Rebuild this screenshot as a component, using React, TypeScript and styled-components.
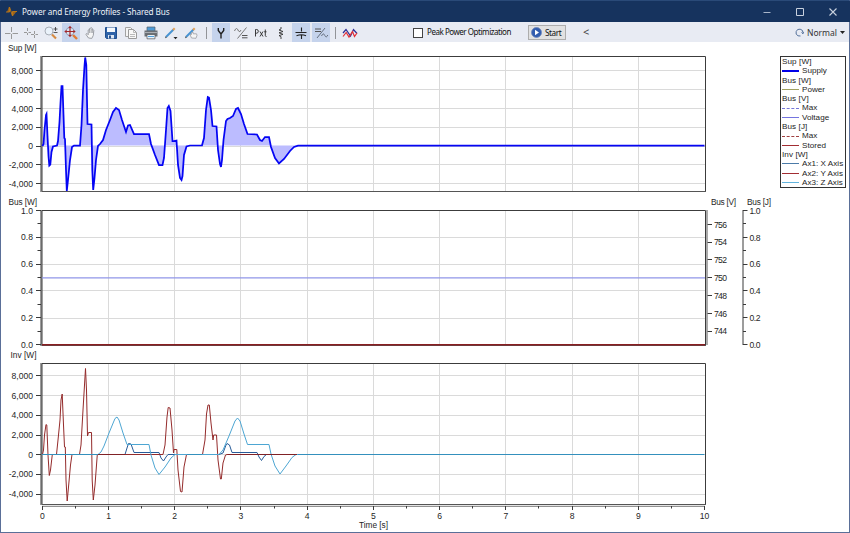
import React from "react";
import styled, { createGlobalStyle } from "styled-components";

const GlobalStyle = createGlobalStyle`
  * { box-sizing: border-box; }
  body { margin: 0; background: #fff; overflow: hidden; }
`;

const Window = styled.div`
  width: 850px;
  height: 533px;
  display: flex;
  flex-direction: column;
  border: 1px solid #5a6f98;
  border-top-color: #2a4a78;
  background: #fff;
  font-family: "Liberation Sans", Arial, sans-serif;
  color: #222;
`;

const TitleBar = styled.header`
  height: 21px;
  flex: none;
  display: flex;
  align-items: center;
  padding-left: 5px;
  margin: 0 -1px;
  background: #16335e;
  color: #eef2f8;
`;

const Title = styled.span`
  flex: 1;
  margin-left: 4px;
  font-family: "Noto Sans", sans-serif;
  font-size: 8.2px;
  line-height: 12px;
  letter-spacing: -0.09px;
`;

const WindowButton = styled.span`
  width: 33px;
  display: flex;
  justify-content: center;
  position: relative;
  left: -1px;
`;

const Toolbar = styled.div`
  height: 20px;
  flex: none;
  display: flex;
  align-items: center;
  gap: 2px;
  padding: 1px 4px 0 1px;
  background: #e8ebf3;
`;

const Tool = styled.span<{ $active?: boolean }>`
  width: 18px;
  height: 19px;
  flex: none;
  display: flex;
  align-items: center;
  justify-content: center;
  background: ${(p) => (p.$active ? "#c5d3ec" : "transparent")};
`;

const Separator = styled.span<{ $before: number; $after: number }>`
  width: 1px;
  height: 12px;
  flex: none;
  margin: 0 ${(p) => p.$after}px 0 ${(p) => p.$before}px;
  background: #929498;
`;

const CheckLabel = styled.label`
  display: flex;
  align-items: center;
  gap: 4px;
  margin-left: 52px;
  width: 113px;
  font-family: "Noto Sans", sans-serif;
  font-size: 8px;
  letter-spacing: -0.46px;
  line-height: 11px;
  white-space: nowrap;
  color: #111;
`;

const CheckBox = styled.span`
  width: 10px;
  height: 10px;
  flex: none;
  border: 1px solid #444;
  background: #fff;
`;

const CheckText = styled.span`
  margin-top: -2px;
`;

const StartButton = styled.button`
  width: 38px;
  height: 15px;
  margin-top: -1px;
  display: flex;
  align-items: center;
  gap: 3px;
  padding: 0 2px;
  border: 1px solid #adadad;
  background: #e1e1e1;
  font: 8.2px "Noto Sans", sans-serif;
  letter-spacing: -0.45px;
  color: #111;
`;

const Collapse = styled.span`
  margin: -3px 0 0 15px;
  font: 11px "Noto Sans", sans-serif;
  color: #444;
`;

const Mode = styled.span`
  margin-left: auto;
  display: flex;
  align-items: center;
  gap: 3px;
  font: 8.5px "Noto Sans", sans-serif;
  color: #333;
`;

const Body = styled.main`
  flex: 1;
  display: flex;
`;

const Charts = styled.section`
  width: 778px;
  display: flex;
  flex-direction: column;

  text {
    font-family: "Liberation Sans", Arial, sans-serif;
    font-size: 8.6px;
    fill: #262626;
  }
`;

const ChartTitle = styled.text`
  && { font-size: 8.3px; }
`;

const Legend = styled.aside`
  width: 66px;
  height: 132px;
  margin: 14px 0 0 1px;
  border: 1px solid #333;
  font-size: 8.1px;
  overflow: hidden;
  color: #1c1c24;
`;

const LegendGroup = styled.div`
  height: 9.3px;
  padding-left: 1px;
  line-height: 9.3px;
  letter-spacing: 0.1px;
`;

const LegendItem = styled.div`
  height: 9.3px;
  display: flex;
  align-items: center;
  gap: 3px;
  padding-left: 1px;
  line-height: 9.3px;
  letter-spacing: 0.03px;
  white-space: nowrap;
`;

const Swatch = styled.span<{ $color: string; $dashed?: boolean; $thick?: boolean }>`
  width: 17px;
  flex: none;
  border-top: ${(p) => (p.$thick ? "2px" : "1px")} ${(p) => (p.$dashed ? "dashed" : "solid")} ${(p) => p.$color};
`;

const X0 = 42.3;
const UNIT = 66.22;
const DARK = "#3a3a3a";
const xs = [1, 2, 3, 4, 5, 6, 7, 8, 9];

type Tick = { y: number; label?: string };

const powerTicks = (zero: number, step: number): Tick[] =>
  [8000, 6000, 4000, 2000, 0, -2000, -4000].map((v) => ({
    y: zero - (v / 2000) * step,
    label: v.toLocaleString("en-US"),
  }));

const unitTicks: Tick[] = Array.from({ length: 11 }, (_, i) => ({
  y: 344.5 - i * 13.4,
  label: i % 2 === 0 ? (i / 10).toFixed(1) : undefined,
}));

const voltTicks: Tick[] = [756, 754, 752, 750, 748, 746, 744].map((v, i) => ({
  y: 224.3 + i * 17.8,
  label: String(v),
}));

function LeftAxis({ ticks }: { ticks: Tick[] }) {
  return (
    <g>
      {ticks.map((t) => (
        <g key={t.y}>
          <path d={`M${t.label ? 36 : 37.5} ${Math.round(t.y - 0.5) + 0.5}H41`} stroke={DARK} />
          {t.label && <text x="33" y={t.y + 3} textAnchor="end">{t.label}</text>}
        </g>
      ))}
    </g>
  );
}

function RightAxis({ x, ticks, line }: { x: number; ticks: Tick[]; line?: boolean }) {
  return (
    <g>
      {line && <path d={`M${x} 210V345`} stroke={DARK} />}
      {ticks.map((t) => (
        <g key={t.y}>
          <path d={`M${x} ${Math.round(t.y - 0.5) + 0.5}h${t.label ? 4.5 : 3}`} stroke={DARK} />
          {t.label && <text x={x + 6.5} y={t.y + 3.2} textLength={line ? 11 : 13}>{t.label}</text>}
        </g>
      ))}
    </g>
  );
}

function Frame({ top, bottom, grid }: { top: number; bottom: number; grid: number[] }) {
  return (
    <g fill="none">
      <g stroke="#dadada">
        {grid.map((y) => <path key={y} d={`M42 ${Math.round(y - 0.5) + 0.5}H705`} />)}
        {xs.map((i) => <path key={i} d={`M${Math.round(X0 + i * UNIT - 0.5) + 0.5} ${top}V${bottom}`} />)}
      </g>
      <path d={`M42 ${bottom}V${top}H705.5V${bottom}`} stroke="#3c3c3c" />
      <path d={`M41 ${top - 0.5}V${bottom + 0.5}`} stroke="#383838" />
      <path d={`M42 ${bottom}H706`} stroke="#555" />
    </g>
  );
}

const SUPPLY =
  "42.5,146 43.5,144 44.5,130 46,115 46.5,114 47.5,136 48.5,156 49.3,165.5 50.3,164.5 51.5,152 53,146.5 57,145.5 58,141 59.5,122 60.5,103 61.5,86 62.5,86 63.5,115 64.3,138 65,139 66,170 66.8,191 68,180 70,160 72,147 74,145.6 80,145.6 81.5,125 83,90 84.5,66 85.2,57.5 86.3,65 87,100 87.5,124 91.5,124.5 92.3,170 93.2,190 94.5,178 96,160 98,146 100,144 103,140 106,130 110,120 113,112 116,108 119,110 122,120 126,132 128,125.5 130,125 134,134 149,134 151,144 155,155 159,165 162.5,165 164,158 166,130 167.5,108 168.8,106 170.5,111 172.5,141 174,141 176.5,140.5 178,165 180,178 181.5,180 182.5,176 184,155 186.5,146.5 190,145.5 202,145.3 204,138 206,110 207.8,97 209,97.5 211,110 212.5,126 216.5,126.5 218,150 220,164 221,167 222,160 223.5,140 226,121 227.5,119 230,118 233,116 236,109 238,108 241,114 244,124 247.5,134 257,134.5 260,140 262,141 265,137 269,137 271,147 275,158 279,163.5 284,159 290,151 294,147 298,145.6 704.5,145.6";

const AX_X =
  "42.5,454.5 125,454.5 127,448 128.5,443.5 131,444 134,452.5 159,452.5 161,458 163.5,461 166,457 168,454.5 219,454.5 223,453 226,445 227,443.5 229.5,445 232,452.5 257,452.5 259,457 261.5,460.5 264,456.5 266.5,454.5 704,454.5";
const AX_Y =
  "42.5,454.5 43.5,450 44.5,435 46,424.5 46.8,425 48,455 49.3,475.5 50.5,470 52.3,454.5 56.5,454.5 58,440 60,420 61,400 62.2,394 63.5,425 64.5,447 65.3,447 66,480 67.2,501 68.5,487 70.5,465 72,454.5 79.5,454.5 81,445 83,410 84.5,385 85.5,368.5 86.5,390 87.5,436 88.5,432.5 91.5,432.5 92.2,480 93.3,500 95,485 97.3,454.5 163,454.5 165,445 167,417 168.2,407.5 170,408 172,430 173.5,453 174,449.5 176.8,449.5 178,470 180.5,491.5 182,492 184,467 186.5,454.5 202.5,454.5 205,440 206.5,414 208,405 209.3,405 211,423 213,440 213.7,435 216.5,435 218,460 220.5,479 221.3,479 223,463 225.5,455 227,454.5 297,454.5";
const AX_Z =
  "42.5,454.5 98,454.5 101,452 104,446 109,433 115,418.5 117,417 119,420 123,433 127,444.5 149,444.5 151,455 155,468 159,474.5 165,467 171,458 175,454.5 219,454.5 223,450 229,436 235,421 237.5,418 240,421 244,434 247.5,444.5 269,444.5 271,454 275,466 280,474 286,466 292,457.5 296,454.5 704.5,454.5";

function SupplyChart() {
  const ticks = powerTicks(146.1, 18.8);
  return (
    <svg width="778" height="153" viewBox="1 42 778 153">
      <ChartTitle x="8" y="50.7" textLength="28.5">Sup [W]</ChartTitle>
      <Frame top={56.5} bottom={191.5} grid={ticks.map((t) => t.y)} />
      <LeftAxis ticks={ticks} />
      <polygon points={`42.5,145.6 ${SUPPLY}`} fill="#bcbcff" />
      <polyline points={SUPPLY} fill="none" stroke="#0505f4" strokeWidth="1.75" />
    </svg>
  );
}

function BusChart() {
  return (
    <svg width="778" height="154" viewBox="1 195 778 154">
      <ChartTitle x="8.5" y="205" textLength="28.5">Bus [W]</ChartTitle>
      <ChartTitle x="711" y="205" textLength="25">Bus [V]</ChartTitle>
      <ChartTitle x="747" y="205" textLength="24">Bus [J]</ChartTitle>
      <Frame top={210.5} bottom={345.5} grid={[237.5, 264.5, 290.5, 318.5]} />
      <LeftAxis ticks={unitTicks} />
      <path d="M707 210V345" stroke="#888" strokeWidth="1.4" />
      <RightAxis x={707.5} ticks={voltTicks} />
      <RightAxis x={743} ticks={unitTicks} line />
      <path d="M42 277.8H705" stroke="#9096e8" strokeWidth="1.3" />
      <path d="M42 344.8H705" stroke="#8a1f22" strokeWidth="1.4" />
    </svg>
  );
}

function InverterChart() {
  const ticks = powerTicks(454.7, 19.7);
  return (
    <svg width="778" height="183" viewBox="1 349 778 183">
      <ChartTitle x="10.5" y="358.4" textLength="26">Inv [W]</ChartTitle>
      <Frame top={363.5} bottom={504.5} grid={ticks.map((t) => t.y)} />
      <LeftAxis ticks={ticks} />
      <path d="M42 506.3H705" stroke="#777" />
      {Array.from({ length: 21 }, (_, i) => (
        <g key={i}>
          <path d={`M${Math.round(X0 + (i * UNIT) / 2 - 0.5) + 0.5} 506V${i % 2 ? 508.5 : 510}`} stroke={DARK} />
          {i % 2 === 0 && <text x={X0 + (i * UNIT) / 2} y="519.3" textAnchor="middle">{i / 2}</text>}
        </g>
      ))}
      <ChartTitle x="359" y="528" textLength="29">Time [s]</ChartTitle>
      <g fill="none" strokeWidth="1">
        <polyline points={AX_X} stroke="#285b98" />
        <polyline points={AX_Y} stroke="#942b2b" />
        <polyline points={AX_Z} stroke="#4da6d3" />
        <path d="M42 454.5H98M187 454.5H202M298 454.5H704" stroke="#3490bd" />
        <path d="M98 454.5H125M228 454.5H297" stroke="#802226" />
      </g>
    </svg>
  );
}

const Icon = ({ children }: { children: React.ReactNode }) => (
  <svg width="16" height="16" viewBox="0 0 16 16" fill="none">{children}</svg>
);

const Floppy = () => (
  <Icon>
    <path d="M2.5 2.5h11v11h-10l-1-1z" fill="#2e62a8" stroke="#204e8e" />
    <path d="M4 2.5h8V7H4z" fill="#f4f7fb" />
    <path d="M5 10h6v3.5H5z" fill="#dce6f3" />
    <path d="M6 10.5h2v3H6z" fill="#285290" />
  </Icon>
);

const Printer = () => (
  <Icon>
    <path d="M4 2h8v4H4z" fill="#4d9ad6" stroke="#55606a" strokeWidth=".7" />
    <path d="M1.5 5.5h13v6h-13z" fill="#6b7076" />
    <path d="M2 7.5h12" stroke="#a9adb2" />
    <path d="M4 9.5h8v4.3H4z" fill="#e8f2fb" stroke="#555" strokeWidth=".7" />
    <path d="M5 11.5h6" stroke="#51a0db" />
  </Icon>
);

const Pencil = () => (
  <g>
    <path d="M3 12L10.5 4.5" stroke="#4794d2" strokeWidth="2" />
    <path d="M10 5l1.7-1.7" stroke="#e2a158" strokeWidth="2" />
    <path d="M2 13.2l.5-2 1.5 1.4z" fill="#555" />
  </g>
);

const legend = [
  { group: "Sup [W]", items: [{ name: "Supply", color: "#0000e8", thick: true }] },
  { group: "Bus [W]", items: [{ name: "Power", color: "#a0a060" }] },
  { group: "Bus [V]", items: [{ name: "Max", color: "#7777d8", dashed: true }, { name: "Voltage", color: "#7474df" }] },
  { group: "Bus [J]", items: [{ name: "Max", color: "#a04040", dashed: true }, { name: "Stored", color: "#a22d32" }] },
  {
    group: "Inv [W]",
    items: [
      { name: "Ax1: X Axis", color: "#4b7ba8" },
      { name: "Ax2: Y Axis", color: "#a22d32" },
      { name: "Ax3: Z Axis", color: "#62b4de" },
    ],
  },
] as { group: string; items: { name: string; color: string; dashed?: boolean; thick?: boolean }[] }[];

export default function App() {
  return (
    <Window>
      <GlobalStyle />
      <TitleBar>
        <svg width="13" height="13" viewBox="0 0 13 13">
          <path d="M2 7L4 1.5 5.5 7zM7 6.5h4.5L8 11z" fill="#9b641b" />
          <path d="M1 7h3.5V2L7.5 11V6.5H12" fill="none" stroke="#b87518" strokeWidth="1" />
        </svg>
        <Title>Power and Energy Profiles - Shared Bus</Title>
        <WindowButton><svg width="8" height="8"><path d="M.5 4.5h7" stroke="#a9b6ca" /></svg></WindowButton>
        <WindowButton><svg width="8" height="8"><path d="M.5.5h7v7h-7z" fill="none" stroke="#c8d1de" /></svg></WindowButton>
        <WindowButton><svg width="8" height="8"><path d="M.5.5l7 7m0-7l-7 7" fill="none" stroke="#c8d1de" strokeWidth="1.1" /></svg></WindowButton>
      </TitleBar>
      <Toolbar>
        <Tool><Icon><path d="M8.5 2v5M8.5 9v5M2 8.5h5.5M9.5 8.5H15" stroke="#999" /></Icon></Tool>
        <Tool><Icon><path d="M4.5 3v3M4.5 8v2M1 7.5h3M5.5 7.5H8M11.5 6v3M11.5 10v3M8 9.5h3M12.5 9.5H15" stroke="#999" /></Icon></Tool>
        <Tool>
          <Icon>
            <path d="M9 9.5l4 4" stroke="#d68b43" strokeWidth="2.2" />
            <circle cx="6" cy="6" r="4" fill="#eaf2fa" stroke="#a7adb6" />
            <path d="M12.5 2v4M10.5 4h4M10.5 7.5h4" stroke="#333" strokeWidth=".8" />
          </Icon>
        </Tool>
        <Tool $active>
          <Icon>
            <path d="M10 10l4 4" stroke="#e17a32" strokeWidth="2.4" />
            <circle cx="7" cy="6.5" r="4" fill="#d9e2f2" stroke="#999fb2" />
            <path d="M7 2v9M2.5 6.5h9" stroke="#a4272a" strokeWidth="1.2" />
            <path d="M7 .8l1.8 2.2H5.2zM7 12.2L5.2 10h3.6zM1.3 6.5L3.5 4.7v3.6zM12.7 6.5l-2.2-1.8v3.6z" fill="#a4272a" />
          </Icon>
        </Tool>
        <Tool>
          <Icon>
            <path d="M5.5 13L3 9.5q0-1.2 1.2-.8l1 1V5q.7-1 1.3 0V3.5q.8-1 1.4 0V3q.9-.8 1.4.5V5q1.2-.9 1.5.4l-.5 5-1.5 3z" fill="#f5f5f5" stroke="#92959c" strokeWidth=".9" />
            <path d="M6.6 4.5V8M8.2 4v4M9.7 4.8V8" stroke="#92959c" strokeWidth=".8" />
          </Icon>
        </Tool>
        <Tool><Floppy /></Tool>
        <Tool>
          <Icon>
            <path d="M2.5 2.5h5l2 2v7h-7z" fill="#f5f5f5" stroke="#a2a2a2" />
            <path d="M5.5 4.5h5l3 3v6h-8z" fill="#f8f8f8" stroke="#9a9a9a" />
            <path d="M10.5 4.5v3h3M7 9.5h5M7 11.5h5" stroke="#aaa" strokeWidth=".8" />
          </Icon>
        </Tool>
        <Tool><Printer /></Tool>
        <Tool><Icon><Pencil /><path d="M10.5 12h4l-2 2.3z" fill="#222" /></Icon></Tool>
        <Tool>
          <Icon>
            <Pencil />
            <path d="M8.5 13L7 9.5h1.5v-2h1.7v1.3h3.3l.5 1.5-1 3z" fill="#f5f5f5" stroke="#9a9da3" strokeWidth=".8" />
          </Icon>
        </Tool>
        <Separator $before={4} $after={3} />
        <Tool $active><Icon><path d="M5.3 3v2.5L8 9l2.7-3.5V3M8 8.5V13.5" stroke="#222" strokeWidth="1.4" /></Icon></Tool>
        <Tool>
          <Icon>
            <path d="M1.5 6q2-5 4 0 1.5 2 2.5-1M13.5 2.5l-9 11" stroke="#777" />
            <path d="M9 10.5h5.5M9 12.8h5.5" stroke="#555" />
          </Icon>
        </Tool>
        <Tool>
          <Icon>
            <path d="M2.5 11.5v-7h1.2q1.6 0 1.6 1.8T3.7 8.2H2.5M7 6.5l3 5m0-5l-3 5M12.3 4.5v6q0 1 1.2 1M11.2 6.8h2.3" stroke="#333" strokeWidth=".95" />
          </Icon>
        </Tool>
        <Tool><Icon><path d="M8 2v2l-2 1 4 1.5-4 1.3 4 1.5-4 1.3 2 1V14" stroke="#333" strokeWidth=".9" /></Icon></Tool>
        <Tool $active><Icon><path d="M8.5 2.5v4M2.5 7.5h11M3.5 10.8q5-2 9.5 0M8.5 9.5V14" stroke="#222" strokeWidth="1.1" /></Icon></Tool>
        <Tool $active>
          <Icon>
            <path d="M2 4h6M2 6.5h6" stroke="#555" strokeWidth="1.2" />
            <path d="M12 3l-8 10M8.5 11q1.8-4 3.3-.5 1.5 3 3-.5" stroke="#667080" />
          </Icon>
        </Tool>
        <Separator $before={3} $after={3} />
        <Tool>
          <Icon>
            <path d="M1 8l3-3.5L8.5 11 11.5 4.5 15 8.5" stroke="#2d2d96" strokeWidth="1.2" />
            <path d="M1 11.5L4.2 7.5 7 12l3.5-5.5L12.5 11.5 15 8" stroke="#e23036" strokeWidth="1.2" />
          </Icon>
        </Tool>
        <CheckLabel><CheckBox /><CheckText>Peak Power Optimization</CheckText></CheckLabel>
        <StartButton>
          <svg width="11" height="11" viewBox="0 0 11 11">
            <circle cx="5.5" cy="5.5" r="5" fill="#315cae" stroke="#6c87bd" strokeWidth=".8" />
            <path d="M4 2.8l4 2.7-4 2.7z" fill="#fff" />
          </svg>
          Start
        </StartButton>
        <Collapse>&lt;</Collapse>
        <Mode>
          <svg width="9" height="9" viewBox="0 0 9 9">
            <path d="M3 7.8A3.5 3.5 0 1 1 8 4.8M6.5 4.5L8 5.8l1-2M5.5 8L3 7.8" fill="none" stroke="#55729c" />
          </svg>
          Normal
          <svg width="5" height="3"><path d="M0 0h5L2.5 3z" fill="#222" /></svg>
        </Mode>
      </Toolbar>
      <Body>
        <Charts>
          <SupplyChart />
          <BusChart />
          <InverterChart />
        </Charts>
        <Legend>
          {legend.map((g) => (
            <React.Fragment key={g.group}>
              <LegendGroup>{g.group}</LegendGroup>
              {g.items.map((it) => (
                <LegendItem key={it.name}>
                  <Swatch $color={it.color} $dashed={it.dashed} $thick={it.thick} />
                  {it.name}
                </LegendItem>
              ))}
            </React.Fragment>
          ))}
        </Legend>
      </Body>
    </Window>
  );
}
